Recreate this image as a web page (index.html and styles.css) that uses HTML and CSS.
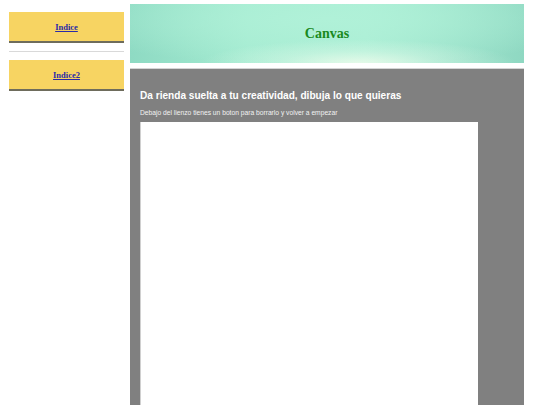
FILE: index.html
```html
<!DOCTYPE html>
<html lang="es">
<head>
<meta charset="utf-8">
<title>Canvas</title>
<link rel="stylesheet" href="styles.css">
</head>
<body>
<div class="page">
  <nav class="sidebar">
    <div class="nav-item"><a href="#">Indice</a></div>
    <hr class="sep">
    <div class="nav-item"><a href="#">Indice2</a></div>
  </nav>
  <div class="content">
    <header class="banner">
      <h1 class="title">Canvas</h1>
    </header>
    <main class="panel">
      <h2 class="panel-title">Da rienda suelta a tu creatividad, dibuja lo que quieras</h2>
      <p class="panel-sub">Debajo del lienzo tienes un boton para borrarlo y volver a empezar</p>
      <div class="drawing"></div>
    </main>
  </div>
</div>
</body>
</html>
```

FILE: styles.css
```css
html, body {
  margin: 0;
  padding: 0;
  background: #ffffff;
  height: 100%;
  overflow: hidden;
}

.page {
  display: flex;
  align-items: flex-start;
  padding: 4px 0 0 9px;
  gap: 6px;
  height: 401px;
}

.sidebar {
  width: 115px;
  padding-top: 8px;
  display: flex;
  flex-direction: column;
}

.nav-item {
  background: #f7d462;
  height: 29px;
  border-bottom: 2px solid #6e6c5c;
  text-align: center;
  box-sizing: content-box;
}

.nav-item a {
  display: inline-block;
  margin-top: 10px;
  font-family: "Liberation Serif", serif;
  font-weight: bold;
  font-size: 8.5px;
  line-height: 10px;
  color: #2a2aa8;
  text-decoration: underline;
}

.sep {
  margin: 8px 0 8px 0;
  border: 0;
  border-top: 1px solid #d9d9d9;
  height: 0;
}

.content {
  width: 394px;
  display: flex;
  flex-direction: column;
  height: 401px;
}

.banner {
  height: 59px;
  display: flex;
  align-items: center;
  justify-content: center;
  background:
    radial-gradient(ellipse 40% 40% at 58% 100%, rgba(238, 252, 236, 0.85) 0%, rgba(226, 250, 234, 0.4) 50%, rgba(200, 244, 224, 0) 100%),
    radial-gradient(ellipse 70% 80% at 50% 25%, #b0f1d8 0%, rgba(170, 236, 210, 0) 100%),
    linear-gradient(90deg, #8edac3 0%, #a4ebd1 30%, #abeed5 60%, #8fd8c2 100%);
}

.title {
  margin: 0;
  font-family: "Liberation Serif", serif;
  font-weight: bold;
  font-size: 14px;
  line-height: 16px;
  color: #1a8a1e;
}

.panel {
  margin-top: 5px;
  border-top: 1px solid #d4d4d4;
  background: #808080;
  flex: 1;
  padding: 21px 0 0 10px;
  overflow: hidden;
}

.panel-title {
  margin: 0;
  font-family: "Liberation Sans", Arial, sans-serif;
  font-weight: bold;
  font-size: 10.1px;
  line-height: 12px;
  color: #ffffff;
}

.panel-sub {
  margin: 7px 0 0 0;
  font-family: "Liberation Sans", Arial, sans-serif;
  font-size: 6.7px;
  line-height: 8px;
  color: #f2f2f2;
}

.drawing {
  margin-top: 5px;
  width: 337px;
  height: 300px;
  background: #ffffff;
  border-left: 1px solid #d0d0d0;
}
```
